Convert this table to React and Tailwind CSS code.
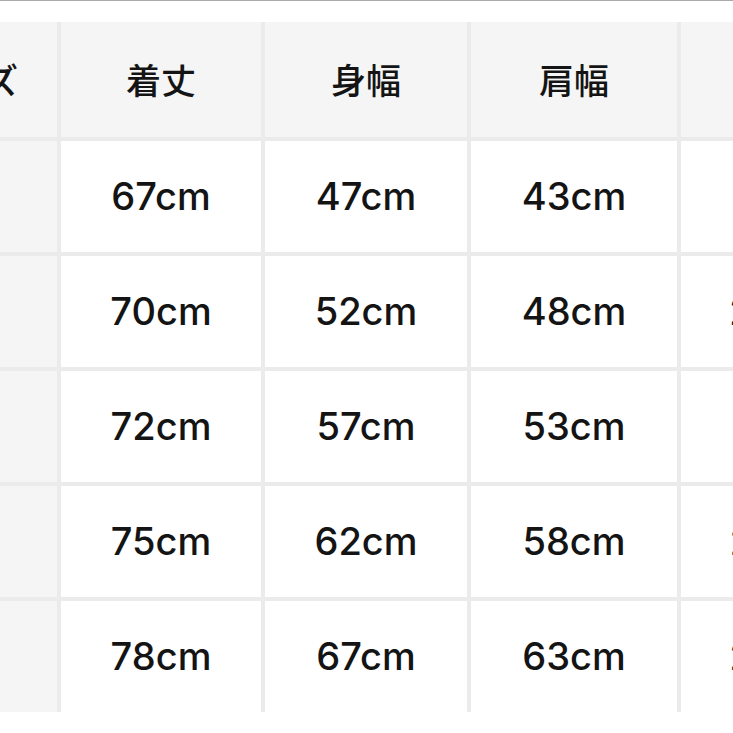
import React from "react";

const headers = ["サイズ", "着丈", "身幅", "肩幅", "袖丈"];
const rows = [
  ["S", "67cm", "47cm", "43cm", "19cm"],
  ["M", "70cm", "52cm", "48cm", "20cm"],
  ["L", "72cm", "57cm", "53cm", "21cm"],
  ["XL", "75cm", "62cm", "58cm", "22cm"],
  ["XXL", "78cm", "67cm", "63cm", "23cm"],
];

const numFont = { fontFamily: "Inter, 'Liberation Sans', sans-serif" };
const cjkFont = { fontFamily: "'Noto Sans CJK JP', 'Noto Sans CJK SC', sans-serif" };

export default function App() {
  return (
    <div className="w-[733px] h-[733px] bg-white overflow-hidden">
      <div className="h-px bg-[#a9a9a9]" />
      <div className="pt-[21px]">
        <div
          className="ml-[-143px] w-[1023px] grid bg-[#ebebeb] gap-y-[4px]"
          style={{ gridTemplateColumns: "200px 200px 202px 206px 200px", columnGap: "4px" }}
        >
          {headers.map((h, i) => (
            <div
              key={h}
              className={`h-[115px] bg-[#f5f5f5] flex items-center text-[35px] font-medium text-[#141414] ${
                i === 0 ? "justify-end pr-[39px]" : "justify-center"
              }`}
              style={cjkFont}
            >
              {h}
            </div>
          ))}
          {rows.map((r) =>
            r.map((c, i) => (
              <div
                key={r[0] + i}
                className={`h-[111px] flex items-center justify-center text-[38px] font-medium text-[#141414] ${
                  i === 0 ? "bg-[#f5f5f5]" : "bg-white"
                }`}
                style={numFont}
              >
                {c}
              </div>
            ))
          )}
        </div>
      </div>
    </div>
  );
}
